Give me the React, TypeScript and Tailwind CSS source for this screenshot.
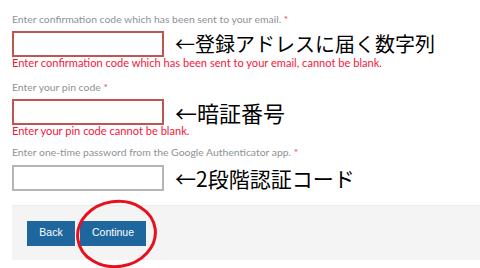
export default function App() {
  const fields = [
    {
      label: "Enter confirmation code which has been sent to your email.",
      error: "Enter confirmation code which has been sent to your email, cannot be blank.",
      note: "←登録アドレスに届く数字列",
      noteSize: "text-[20px]",
    },
    {
      label: "Enter your pin code",
      error: "Enter your pin code cannot be blank.",
      note: "←暗証番号",
      noteSize: "text-[22px]",
    },
    {
      label: "Enter one-time password from the Google Authenticator app.",
      error: "",
      note: "←2段階認証コード",
      noteSize: "text-[21px]",
    },
  ];

  return (
    <div className="relative w-[480px] h-[268px] overflow-hidden bg-white">
      <div className="pl-3 pt-3 flex flex-col">
        {fields.map((f, i) => (
          <div key={i} className={i === 0 ? "" : i === 1 ? "mt-[10px]" : "mt-[7px]"}>
            <div
              className="text-[10.4px] leading-[14px] text-[#8e9296]"
              style={{ fontFamily: "Lato, 'Liberation Sans', sans-serif" }}
            >
              {f.label} <span className="text-[#d9534f]">*</span>
            </div>
            <div className={i === 2 ? "mt-[6px] flex items-center" : "mt-[5px] flex items-center"}>
              <div
                className={
                  f.error
                    ? "w-[152px] h-[26px] border-2 border-[#bf5550] bg-white"
                    : "w-[152px] h-[26px] border-2 border-[#b5b5b5] bg-white"
                }
              />
              <div
                className={`ml-[11px] ${f.noteSize} leading-[26px] text-black`}
                style={{ fontFamily: "'Noto Sans CJK JP', sans-serif" }}
              >
                {f.note}
              </div>
            </div>
            {f.error && (
              <div
                className="text-[11.1px] leading-[14px] text-[#f5163c] -mt-[1px]"
                style={{ fontFamily: "Lato, 'Liberation Sans', sans-serif" }}
              >
                {f.error}
              </div>
            )}
          </div>
        ))}
      </div>

      <div className="ml-3 mt-[14px] h-[55px] bg-[#f4f4f4] border-t border-[#ececec] flex items-center gap-[5px] pl-[15px]">
        <button
          className="h-[25px] w-[48px] bg-[#1d679e] text-white text-[10.5px]"
          style={{ fontFamily: "'Liberation Sans', sans-serif" }}
        >
          Back
        </button>
        <button
          className="h-[25px] w-[66px] bg-[#1d679e] text-white text-[10.5px]"
          style={{ fontFamily: "'Liberation Sans', sans-serif" }}
        >
          Continue
        </button>
      </div>

      <svg className="absolute left-0 top-0 pointer-events-none" width="480" height="268">
        <ellipse
          cx="116.5"
          cy="234"
          rx="39"
          ry="32.5"
          fill="none"
          stroke="#e8101e"
          strokeWidth="3"
          transform="rotate(-8 116.5 234)"
        />
      </svg>
    </div>
  );
}
